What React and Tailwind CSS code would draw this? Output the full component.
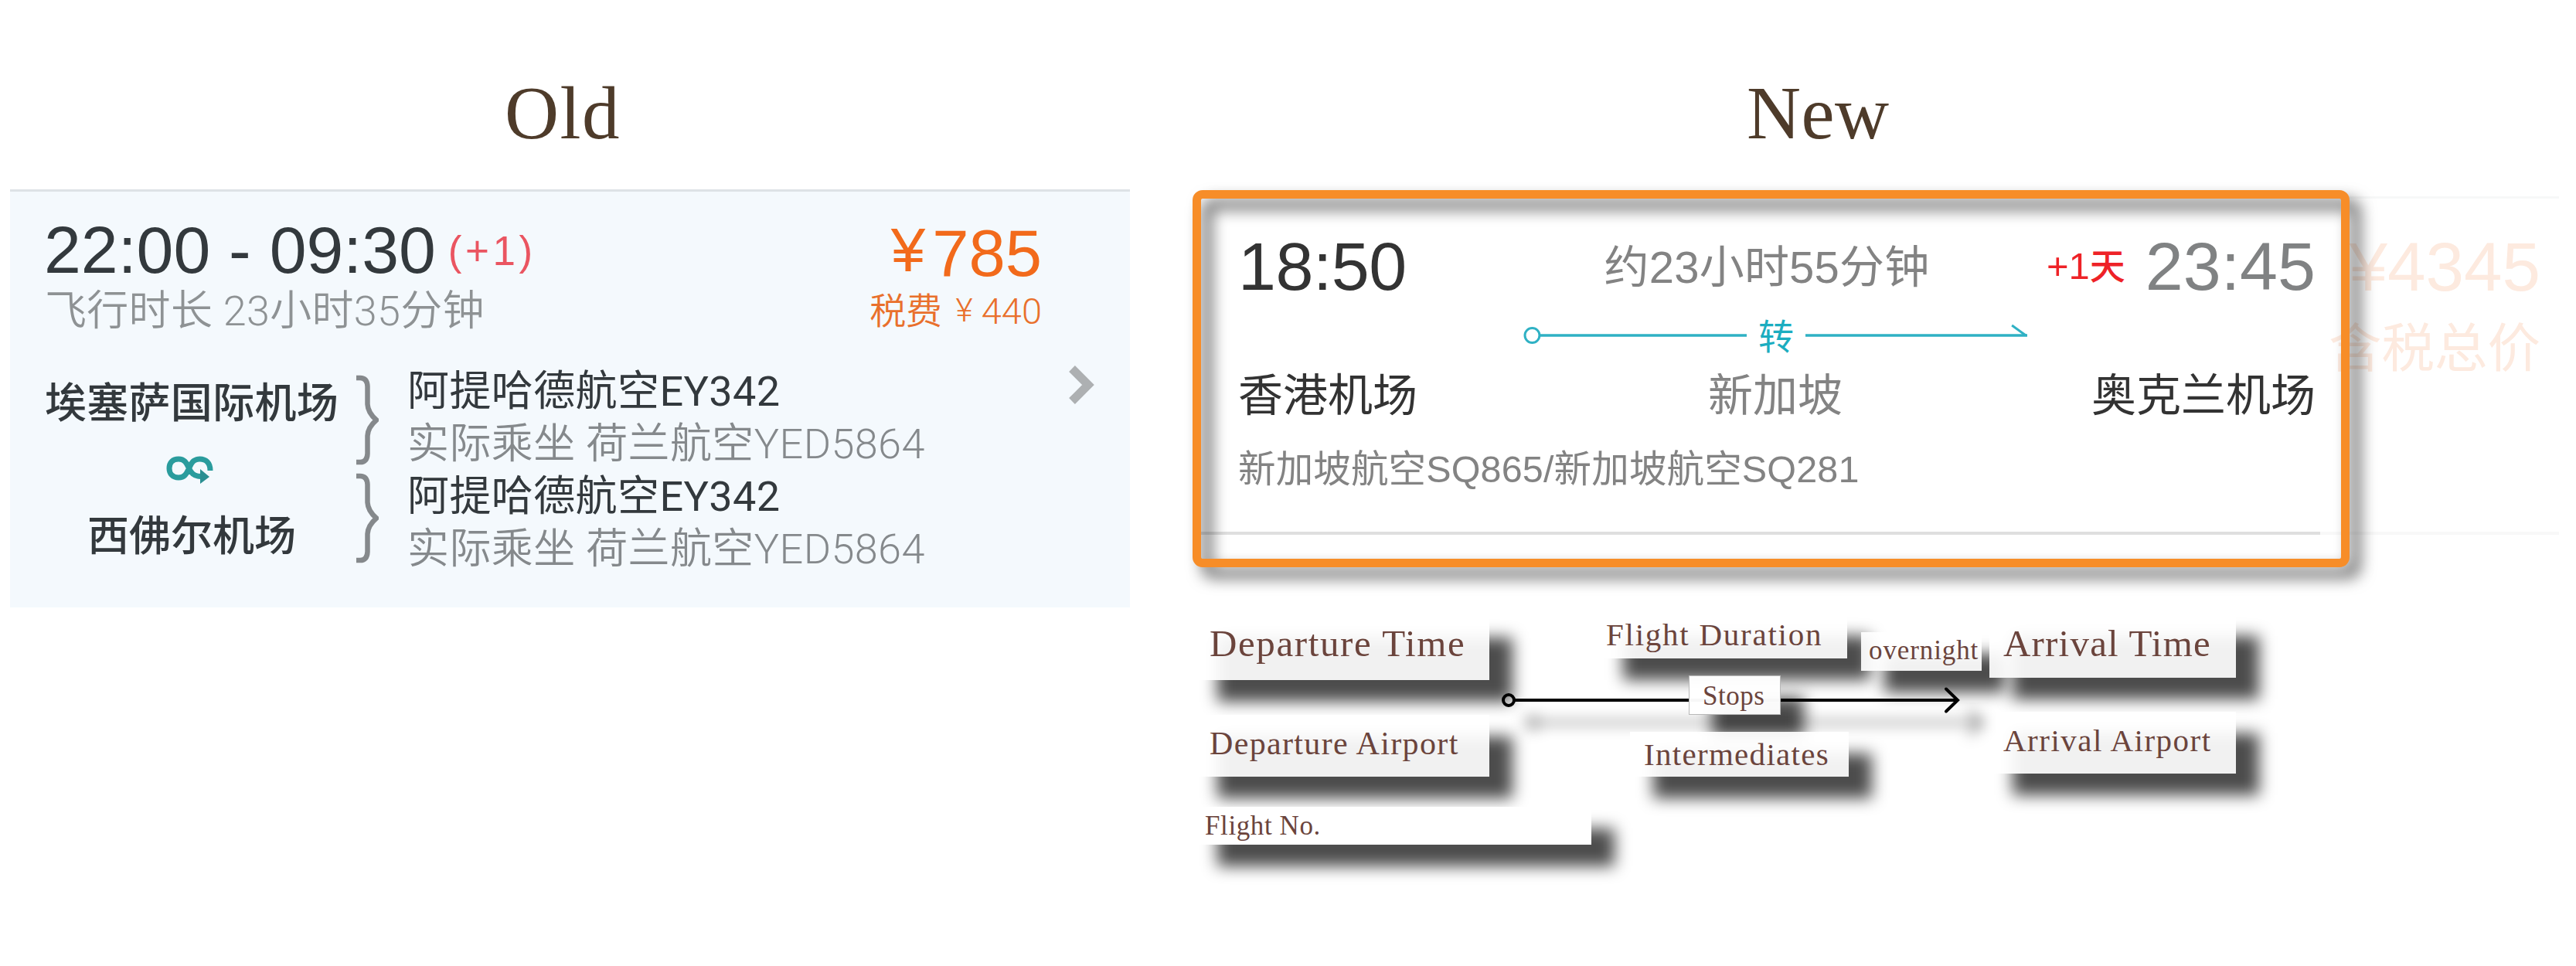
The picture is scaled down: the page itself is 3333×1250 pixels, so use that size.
const SERIF = "font-['Liberation_Serif','Noto_Sans_CJK_SC',serif]";
const SANS = "font-['Liberation_Sans','Noto_Sans_CJK_SC',sans-serif]";
const LIGHT = "font-['Roboto','Noto_Sans_CJK_SC',sans-serif]";

function Title({ children, className }) {
  return (
    <h2 className={`${SERIF} whitespace-nowrap text-[97px] leading-none text-[#4e3b2a] ${className}`}>
      {children}
    </h2>
  );
}

function Brace() {
  return (
    <svg width="30" height="117" viewBox="0 0 30 117" fill="none" stroke="#85898c" strokeWidth="6.5">
      <path d="M1 4H6Q15 4 15.500 15V38Q16 49 27 58.500Q16 68 15.500 79V102Q15 113 6 113H1" />
    </svg>
  );
}

function TransferIcon() {
  return (
    <svg width="62" height="38" viewBox="0 0 62 38" fill="none">
      <path
        d="M58 20C58 9.500 52 5 44.500 5C35 5 33 12 30.500 17C28 22 26 29 17 29C9.500 29 5 24 5 17C5 9.500 9.500 5 17 5C26 5 28 12 30.500 17C33 22 36 27.500 46 27.500"
        stroke="#2a9c9d"
        strokeWidth="7"
      />
      <path d="M45 18L57 28L45 37Z" fill="#2a8f92" />
    </svg>
  );
}

function FlightLeg() {
  return (
    <div className={`${LIGHT} whitespace-nowrap text-[54px] leading-[68px] tracking-[0.400px]`}>
      <p className="text-[#33393d]">阿提哈德航空EY342</p>
      <p className="font-[350] text-[#85898c]">实际乘坐 荷兰航空YED5864</p>
    </div>
  );
}

function OldCard() {
  return (
    <section className="mt-[50px] flex h-[541px] w-[1449px] flex-col border-t-[3px] border-[#dde2e6] bg-[#f4f9fd] pl-[45px]">
      <div className="flex h-[223px] justify-between pr-[114px] pt-[35px]">
        <div>
          <div className="flex items-start">
            <p className={`${SANS} -ml-px whitespace-nowrap text-[86px] leading-[80px] text-[#33393d]`}>22:00 - 09:30</p>
            <p className={`${SANS} ml-[16px] mt-[12px] whitespace-nowrap text-[53px] leading-[60px] tracking-[4.500px] text-[#ea5561]`}>
              (+1)
            </p>
          </div>
          <p className={`${LIGHT} mt-[10px] whitespace-nowrap text-[54px] font-[350] leading-[60px] tracking-[0.300px] text-[#8e9294]`}>
            飞行时长 23小时35分钟
          </p>
        </div>
        <div className="flex flex-col items-end pt-[5px]">
          <p className={`${SANS} whitespace-nowrap text-[85px] leading-[80px] text-[#f26a1b]`}>
            <span className="relative top-[-6px] mr-[9px] text-[80px]">¥</span>785
          </p>
          <p className={`${LIGHT} mt-[8px] whitespace-nowrap text-[47px] font-[350] leading-[50px] text-[#e9702c]`}>
            税费 <span className="relative top-[-3px] ml-[6px] mr-[11px] text-[43px]">¥</span>440
          </p>
        </div>
      </div>
      <div className="flex items-start">
        <div className={`${SANS} flex w-[380px] flex-col items-center pt-[21px] text-[54px] leading-[60px] text-[#33393d]`}>
          <p className="whitespace-nowrap font-medium tracking-[0.300px]">埃塞萨国际机场</p>
          <div className="flex h-[112px] items-center pr-[6px]">
            <TransferIcon />
          </div>
          <p className="whitespace-nowrap font-medium">西佛尔机场</p>
        </div>
        <div className="ml-[22px] mt-[14px] flex flex-col gap-[10px]">
          <Brace />
          <Brace />
        </div>
        <div className="ml-[37px] mt-[2px] w-[680px]">
          <FlightLeg />
          <FlightLeg />
        </div>
        <svg className="ml-[176px] mt-[1px]" width="36" height="52" viewBox="0 0 36 52" fill="none">
          <path d="M4 5L25 26L4 47" stroke="#adb0b2" strokeWidth="11" />
        </svg>
      </div>
    </section>
  );
}

function TransferLine() {
  return (
    <div className="flex h-[60px] w-[652px] items-center text-[#1badc0]">
      <svg width="290" height="30" viewBox="0 0 290 30" fill="none" stroke="#2fb1c4">
        <circle cx="11.500" cy="15" r="9.500" strokeWidth="3" />
        <path d="M21 15H290" strokeWidth="3.500" />
      </svg>
      <span className="mx-[14px] w-[48px] pt-[4px] text-center text-[46px] leading-[60px]">转</span>
      <svg width="288" height="30" viewBox="0 0 288 30" fill="none" stroke="#2fb1c4">
        <path d="M0 15H288" strokeWidth="3.500" />
        <path d="M268 2L286 15" strokeWidth="3" />
      </svg>
    </div>
  );
}

function NewCard() {
  return (
    <section className={`${SANS} relative mt-[59px] flex h-[438px] w-[1768px]`}>
      <div className="flex w-[1459px] flex-col border-b-4 border-[#dfdfdf] pl-[59px] pr-[6px] pt-[46px]">
        <div className="flex">
          <div className="w-[369px] text-[#333333]">
            <p className="whitespace-nowrap text-[88px] leading-[90px] tracking-[-0.500px]">18:50</p>
            <p className="mt-[92px] whitespace-nowrap text-[58px] leading-[60px]">香港机场</p>
          </div>
          <div className="flex w-[652px] flex-col items-center text-[#838383]">
            <p className="mr-[22px] mt-[16px] whitespace-nowrap text-[58px] leading-[60px] tracking-[0.200px]">约23小时55分钟</p>
            <div className="mt-[28px]">
              <TransferLine />
            </div>
            <p className="mt-[18px] whitespace-nowrap text-[58px] leading-[60px]">新加坡</p>
          </div>
          <div className="flex w-[373px] flex-col items-end">
            <div className="flex items-start whitespace-nowrap">
              <p className="mr-[26px] mt-[14px] text-[46px] font-medium leading-[60px] text-[#ee2227]">
                <span className="text-[49px]">+1</span>天
              </p>
              <p className="text-[88px] leading-[90px] text-[#808283]">23:45</p>
            </div>
            <p className="mt-[92px] whitespace-nowrap text-[58px] leading-[60px] text-[#333333]">奥克兰机场</p>
          </div>
        </div>
        <p className="mt-[35px] whitespace-nowrap text-[48.500px] leading-[60px] tracking-[0.150px] text-[#838383]">
          新加坡航空SQ865/新加坡航空SQ281
        </p>
      </div>
      <div className="flex w-[309px] flex-col items-end border-b-4 border-t-[3px] border-b-[#f8f8f8] border-t-[#f7f8f8] pr-[24px] pt-[43px] text-[#fdeadf]">
        <p className="whitespace-nowrap text-[89px] leading-[90px]">¥4345</p>
        <p className="mt-[27px] whitespace-nowrap text-[68.500px] leading-[70px]">含税总价</p>
      </div>
      <div className="absolute left-0 top-[-8px] h-[488px] w-[1497px] rounded-[13px] border-[11px] border-[#f78d28] drop-shadow-[13px_13px_10px_rgba(0,0,0,0.7)]" />
    </section>
  );
}

function Label({ children, box, text, fill = "bg-white/92" }) {
  return (
    <div className={`relative shrink-0 ${box}`}>
      <div className="absolute inset-0 translate-x-[30px] translate-y-[28px] bg-black/70 blur-[10px]" />
      <div className={`relative h-full w-full whitespace-nowrap leading-none text-[#6b443c] ${fill} ${text}`}>
        {children}
      </div>
    </div>
  );
}

function LegendArrow() {
  return (
    <svg
      className="absolute left-[399px] top-[85px] z-10"
      width="640"
      height="90"
      viewBox="0 0 640 90"
      fill="none"
    >
      <defs>
        <filter id="soft" x="-20" y="0" width="660" height="90" filterUnits="userSpaceOnUse">
          <feGaussianBlur stdDeviation="9" />
        </filter>
        <g id="arrow">
          <circle cx="10" cy="26" r="7" />
          <path d="M18 26H590" />
          <path d="M576 11.500L591 26L576 40.500" strokeLinecap="round" />
        </g>
      </defs>
      <use href="#arrow" x="31" y="29" stroke="#000000" strokeOpacity="0.6" strokeWidth="4" filter="url(#soft)" />
      <use href="#arrow" stroke="#000000" strokeWidth="4" />
    </svg>
  );
}

function Legend() {
  return (
    <section className={`${SERIF} relative mt-[103px] flex pl-[2px]`}>
      <LegendArrow />
      <div className="flex w-[525px] flex-col pt-[2px]">
        <Label box="h-[83px] w-[382px]" text="pl-[20px] pt-[11px] text-[49px] tracking-[1.600px]">
          Departure Time
        </Label>
        <Label box="mt-[45px] h-[80px] w-[382px]" text="pl-[20px] pt-[16px] text-[42px] tracking-[1.350px]">
          Departure Airport
        </Label>
        <Label box="mt-[39px] h-[49px] w-[514px]" text="pl-[14px] pt-[7px] text-[35px] tracking-[0.600px]" fill="bg-white">
          Flight No.
        </Label>
      </div>
      <div className="flex w-[338px] flex-col">
        <Label box="h-[57px] w-[320px]" text="pl-[8px] pt-[6px] text-[41px] tracking-[1.750px]">
          Flight Duration
        </Label>
        <Label
          box="z-20 ml-[115px] mt-[22px] h-[51px] w-[119px]"
          text="border border-[#b8b8b8] pl-[17px] pt-[8px] text-[35px] tracking-[0.500px]"
          fill="bg-white/97"
        >
          Stops
        </Label>
        <Label box="z-20 ml-[39px] mt-[22px] h-[58px] w-[283px]" text="pl-[18px] pt-[9px] text-[41px] tracking-[1.300px]">
          Intermediates
        </Label>
      </div>
      <Label box="mt-[23px] h-[50px] w-[156px]" text="pl-[10px] pt-[6px] text-[35px] tracking-[0.900px]">
        overnight
      </Label>
      <div className="ml-[10px] flex flex-col">
        <Label box="h-[82px] w-[319px]" text="pl-[18px] pt-[13px] text-[49px] tracking-[1.200px]">
          Arrival Time
        </Label>
        <Label box="mt-[44px] h-[80px] w-[319px]" text="pl-[18px] pt-[17px] text-[41px] tracking-[1.500px]">
          Arrival Airport
        </Label>
      </div>
    </section>
  );
}

export default function App() {
  return (
    <main lang="zh-CN" className="flex h-[1250px] w-[3333px] overflow-hidden bg-white pt-[98px]">
      <div className="w-[1543px] shrink-0 pl-[13px]">
        <Title className="pl-[640px] tracking-[1.500px]">Old</Title>
        <OldCard />
      </div>
      <div className="w-[1790px] shrink-0">
        <Title className="pl-[717px] tracking-[0.500px]">New</Title>
        <NewCard />
        <Legend />
      </div>
    </main>
  );
}
